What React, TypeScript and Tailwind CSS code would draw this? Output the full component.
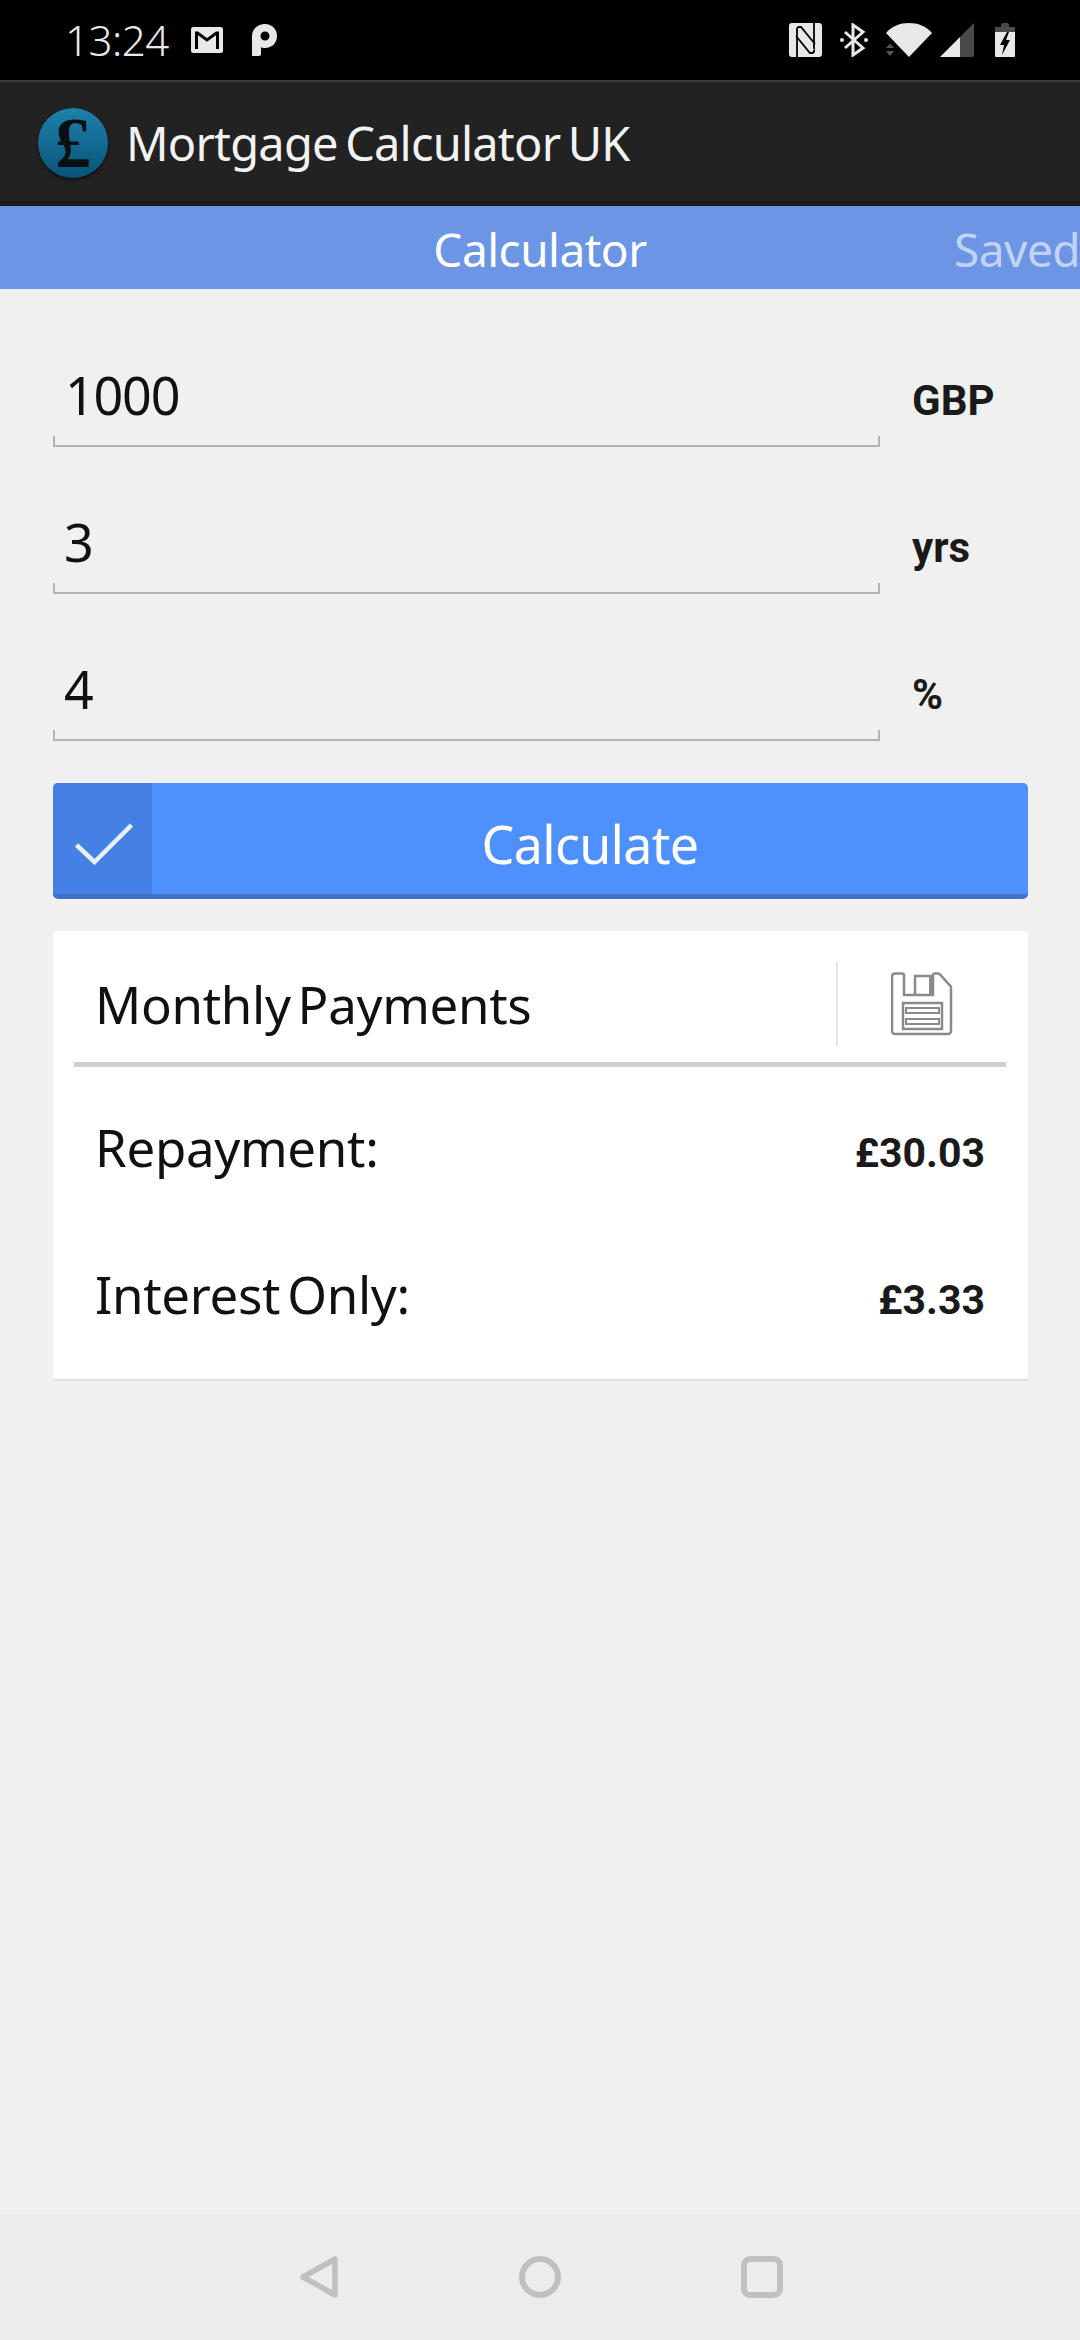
import React from 'react';

const sans = { fontFamily: '"Noto Sans", sans-serif' };
const bold = { fontFamily: 'Roboto, sans-serif' };

const GmailIcon = () => (
  <svg width="32" height="26" viewBox="0 0 32 26">
    <rect width="32" height="26" rx="2.500" fill="#e8e8e8" />
    <path d="M5.500 22V6h1l9.500 7 9.500-7h1v16" fill="none" stroke="#000" strokeWidth="3" />
  </svg>
);

const ParkingIcon = () => (
  <svg width="25" height="32" viewBox="0 0 25 32">
    <path fillRule="evenodd" fill="#e8e8e8" d="M0 12C0 5 6 0 13 0s12 5 12 12-5 12-12 12c-2 0-3-.3-4-.7V30a2 2 0 0 1-2 2H0zM13 7.500a4.500 4.500 0 1 0 0 9 4.500 4.500 0 0 0 0-9z" />
  </svg>
);

const NfcIcon = () => (
  <svg width="33" height="34" viewBox="0 0 33 34">
    <rect width="33" height="34" rx="3" fill="#e8e8e8" />
    <path fill="none" stroke="#000" strokeWidth="1.800" d="M8 34V6a2 2 0 0 1 2-2h2l14 17M25 0v28a2 2 0 0 1-2 2h-2L7 13" />
    <path fill="none" stroke="#e8e8e8" strokeWidth="1" d="M16 17l9 10" />
  </svg>
);

const BluetoothIcon = () => (
  <svg width="28" height="34" viewBox="0 0 28 34" fill="none" stroke="#e8e8e8" strokeWidth="3">
    <path d="M5 9l18 16-10 7V2l10 7L5 25" />
    <circle cx="2" cy="17" r="2" fill="#e8e8e8" stroke="none" />
    <circle cx="26" cy="17" r="2" fill="#e8e8e8" stroke="none" />
  </svg>
);

const WifiIcon = () => (
  <svg width="46" height="34" viewBox="0 0 46 34">
    <path fill="#e8e8e8" d="M0 10C6 3 14 0 23 0s17 3 23 10L23 34z" />
    <path fill="#555" d="M0 25l4-4.500 4 4.500zM0 28h8l-4 5z" />
  </svg>
);

const SignalIcon = () => (
  <svg width="34" height="34" viewBox="0 0 34 34">
    <path fill="#4a4a4a" d="M34 0v32a2 2 0 0 1-2 2H20V14z" />
    <path fill="#e8e8e8" d="M20 14v20H0z" />
  </svg>
);

const BatteryIcon = () => (
  <svg width="20" height="34" viewBox="0 0 20 34">
    <path fill="#4a4a4a" d="M6 2a2 2 0 0 1 2-2h4a2 2 0 0 1 2 2v2h6v5H0V4h6z" />
    <path fill="#e8e8e8" fillRule="evenodd" d="M0 9h20v24a1 1 0 0 1-1 1H1a1 1 0 0 1-1-1zM12 9l-7 13h4l-2 10 8-15h-4l3-8z" />
  </svg>
);

const PoundLogo = () => (
  <div className="flex h-[70px] w-[70px] items-center justify-center rounded-full bg-gradient-to-b from-[#1d82ad] to-[#0a5378] shadow-[0_2px_3px_rgba(0,0,0,0.6)]">
    <span className="text-[72px] leading-none font-bold text-[#0a0f12]" style={{ fontFamily: '"Liberation Serif", serif' }}>£</span>
  </div>
);

const CheckIcon = () => (
  <svg width="58" height="42" viewBox="0 0 58 42" fill="none" stroke="#e9effc" strokeWidth="4.500">
    <path d="M1.500 22l18 17L56.500 2" />
  </svg>
);

const SaveIcon = () => (
  <svg width="62" height="64" viewBox="0 0 62 64" fill="none" stroke="#8a8a8a" strokeWidth="2.500">
    <path d="M4 1.500h7a2 2 0 0 1 2 2V23h29V3.500a2 2 0 0 1 2-2h2a5 5 0 0 1 3 1l10 11a3 3 0 0 1 1 2V59a3 3 0 0 1-3 3H4a3 3 0 0 1-3-3V4.500a3 3 0 0 1 3-3z" />
    <path d="M24 23V4h16v19" />
    <path fill="#8a8a8a" stroke="none" d="M38 4h4v19h-4z" />
    <path d="M12 31h39v26H12z" />
    <path strokeWidth="2" d="M15 36h33v5H15zM15 47h33v5H15z" />
  </svg>
);

const BackIcon = () => (
  <svg width="38" height="42" viewBox="0 0 38 42" fill="none" stroke="#c0c0c0" strokeWidth="5.500" strokeLinejoin="round">
    <path d="M35 3v36L3 21z" />
  </svg>
);

const Field = ({ value, unit, pad }: { value: string; unit: string; pad: string }) => (
  <div className="flex h-[147px] items-start">
    <div className="flex h-full w-[827px] flex-col">
      <div className={`flex flex-1 items-start pt-[69px] ${pad}`}>
        <span className="text-[52px] leading-none tracking-[-1.200px] text-[#111]" style={sans}>{value}</span>
      </div>
      <div className="h-[11px] border-x-2 border-b-2 border-[#b4b4b4]" />
    </div>
    <span className="ml-[32px] mt-[80px] text-[42px] leading-none font-bold text-[#1a1a1a]" style={bold}>{unit}</span>
  </div>
);

const ResultRow = ({ label, amount }: { label: string; amount: string }) => (
  <div className="flex h-[147px] items-baseline justify-between pt-[55px] pl-[42px] pr-[43px]">
    <span className="text-[51px] leading-none tracking-[-0.300px] text-[#111] [word-spacing:-6px]" style={sans}>{label}</span>
    <span className="text-[41px] leading-none font-bold text-[#1a1a1a]" style={bold}>{amount}</span>
  </div>
);

export default function App() {
  return (
    <div className="flex h-[2340px] w-[1080px] flex-col overflow-hidden bg-[#f0f0f0]">
      {/* Status bar */}
      <div className="flex h-[80px] items-center justify-between bg-black pl-[65px] pr-[65px]">
        <div className="flex items-center">
          <span className="text-[42px] leading-none font-light tracking-[-0.500px] text-[#e8e8e8]" style={sans}>13:24</span>
          <span className="ml-[22px] flex"><GmailIcon /></span>
          <span className="ml-[29px] flex"><ParkingIcon /></span>
        </div>
        <div className="flex items-center">
          <NfcIcon />
          <span className="ml-[18px] flex"><BluetoothIcon /></span>
          <span className="ml-[18px] flex"><WifiIcon /></span>
          <span className="ml-[8px] flex"><SignalIcon /></span>
          <span className="ml-[21px] flex"><BatteryIcon /></span>
        </div>
      </div>

      {/* App bar */}
      <div className="flex h-[126px] items-center border-t-[2px] border-b-[5px] border-t-[#3c3c3c] border-b-[#1a1a1a] bg-[#222222] pt-[3px] pl-[38px]">
        <PoundLogo />
        <span className="ml-[18px] text-[47px] leading-none tracking-[-0.800px] text-[#f2f2f2] [word-spacing:-4px]" style={sans}>Mortgage Calculator UK</span>
      </div>

      {/* Tabs */}
      <div className="relative flex h-[83px] items-center justify-center bg-[#6c95e6] pt-[2px]">
        <span className="text-[46px] leading-none tracking-[-0.500px] text-white" style={sans}>Calculator</span>
        <span className="absolute left-[954px] text-[46px] leading-none tracking-[-0.500px] whitespace-nowrap text-[#c3d3f4]" style={sans}>Saved</span>
      </div>

      {/* Form */}
      <div className="flex flex-1 flex-col px-[53px] pt-[11px]">
        <Field value="1000" unit="GBP" pad="pl-[12px]" />
        <Field value="3" unit="yrs" pad="pl-[11px]" />
        <Field value="4" unit="%" pad="pl-[11px]" />

        <button className="mt-[42px] flex h-[116px] w-[975px] overflow-hidden rounded-[5px] border-b-[5px] border-[#3f72c4] bg-[#4d90fe]">
          <span className="flex h-full w-[99px] items-center justify-center bg-[#4581e4] pt-[10px] pl-[2px]"><CheckIcon /></span>
          <span className="flex-1 pt-[7px] text-center text-[52px] leading-[107px] tracking-[-0.700px] text-white" style={sans}>Calculate</span>
        </button>

        {/* Results */}
        <div className="mt-[32px] w-[975px] rounded-[3px] border-b-2 border-[#dedede] bg-white pb-[18px]">
          <div className="ml-[21px] mr-[22px] flex h-[136px] items-center justify-between border-b-[5px] border-[#cfcfcf] pt-[15px]">
            <span className="ml-[21px] text-[51px] leading-none tracking-[-0.300px] text-[#111] [word-spacing:-6px]" style={sans}>Monthly Payments</span>
            <div className="flex items-center">
              <div className="h-[84px] w-[2px] bg-[#e2e2e2]" />
              <span className="ml-[53px] mr-[53px] flex"><SaveIcon /></span>
            </div>
          </div>
          <ResultRow label="Repayment:" amount="£30.03" />
          <ResultRow label="Interest Only:" amount="£3.33" />
        </div>
      </div>

      {/* Nav bar */}
      <div className="flex h-[126px] items-center bg-[#ececec] pl-[300px]">
        <BackIcon />
        <div className="ml-[181px] h-[42px] w-[42px] rounded-full border-[6px] border-[#c0c0c0]" />
        <div className="ml-[180px] h-[42px] w-[42px] rounded-[9px] border-[6px] border-[#c0c0c0]" />
      </div>
    </div>
  );
}
